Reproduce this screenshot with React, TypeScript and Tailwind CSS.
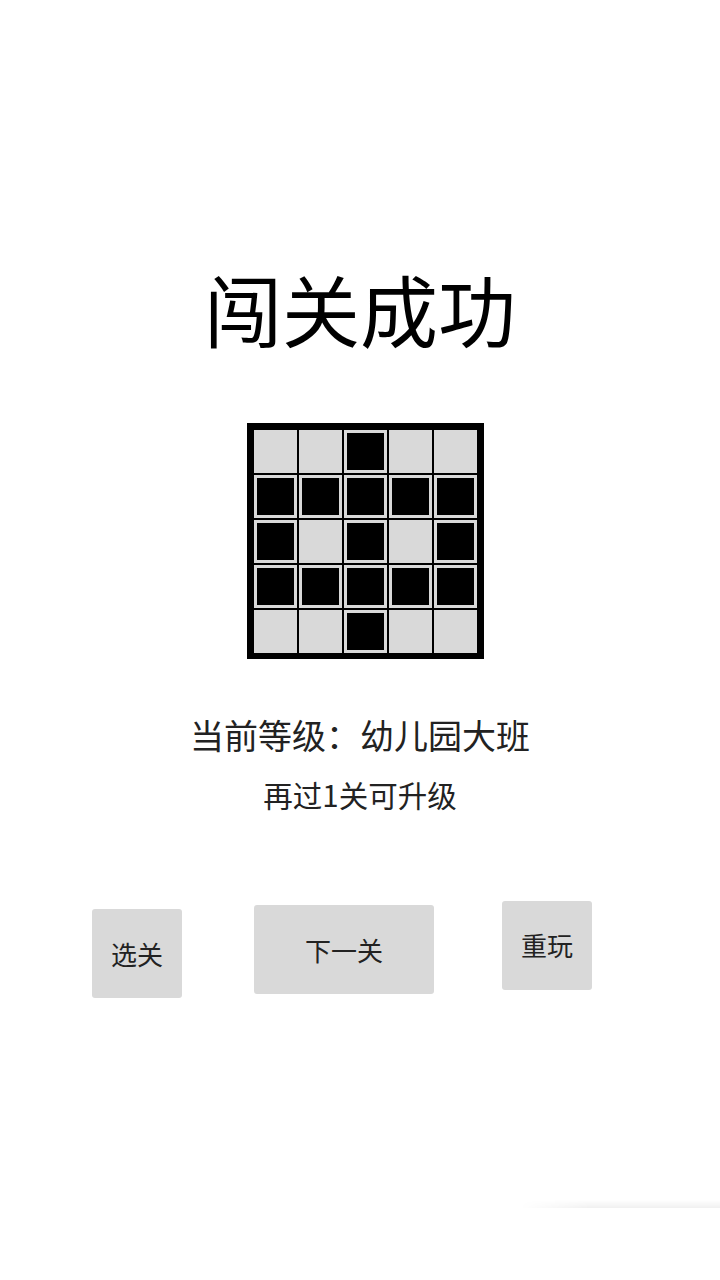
import React from 'react';

// 1 = dark cell, 0 = light cell
const pattern = [
  [0, 0, 1, 0, 0],
  [1, 1, 1, 1, 1],
  [1, 0, 1, 0, 1],
  [1, 1, 1, 1, 1],
  [0, 0, 1, 0, 0],
];

function Board() {
  return (
    <div className="bg-black p-[7px] w-[237px] h-[236px]">
      <div className="grid grid-cols-5 gap-[2px]">
        {pattern.flat().map((v, i) => (
          <div key={i} className="h-[43px] bg-[#d9d9d9] p-[3px]">
            {v === 1 && <div className="w-full h-full bg-black" />}
          </div>
        ))}
      </div>
    </div>
  );
}

export default function App() {
  const font = { fontFamily: '"Noto Sans CJK SC", "Noto Sans", sans-serif' };

  return (
    <div className="relative w-full h-[1280px] bg-white flex flex-col items-center overflow-hidden" style={font}>
      {/* 标题 */}
      <h1 className="mt-[269px] text-[78px] leading-[78px] font-normal text-black">闯关成功</h1>

      <div className="mt-[76px] ml-[11px]">
        <Board />
      </div>

      <div className="mt-[56px] text-[34px] leading-[40px] text-[#222]">当前等级：幼儿园大班</div>
      <div className="mt-[21px] text-[29.5px] leading-[36px] text-[#222]">再过1关可升级</div>

      {/* 按钮 */}
      <div className="mt-[89px] w-full flex items-start pl-[92px]">
        <button className="mt-[8px] w-[90px] h-[89px] bg-[#d9d9d9] rounded-[3px] text-[26px] text-[#222] flex items-center justify-center">
          选关
        </button>
        <button className="ml-[72px] mt-[4px] w-[180px] h-[89px] bg-[#d9d9d9] rounded-[3px] text-[26px] text-[#222] flex items-center justify-center">
          下一关
        </button>
        <button className="ml-[68px] w-[90px] h-[89px] bg-[#d9d9d9] rounded-[3px] text-[26px] text-[#222] flex items-center justify-center pb-[2px]">
          重玩
        </button>
      </div>

      {/* 右下角阴影 */}
      <div className="absolute right-0 top-[1200px] w-[200px] h-[8px] bg-[linear-gradient(to_bottom,rgba(0,0,0,0),rgba(0,0,0,0.06))] [mask-image:linear-gradient(to_right,transparent,black_35%)]" />
    </div>
  );
}
